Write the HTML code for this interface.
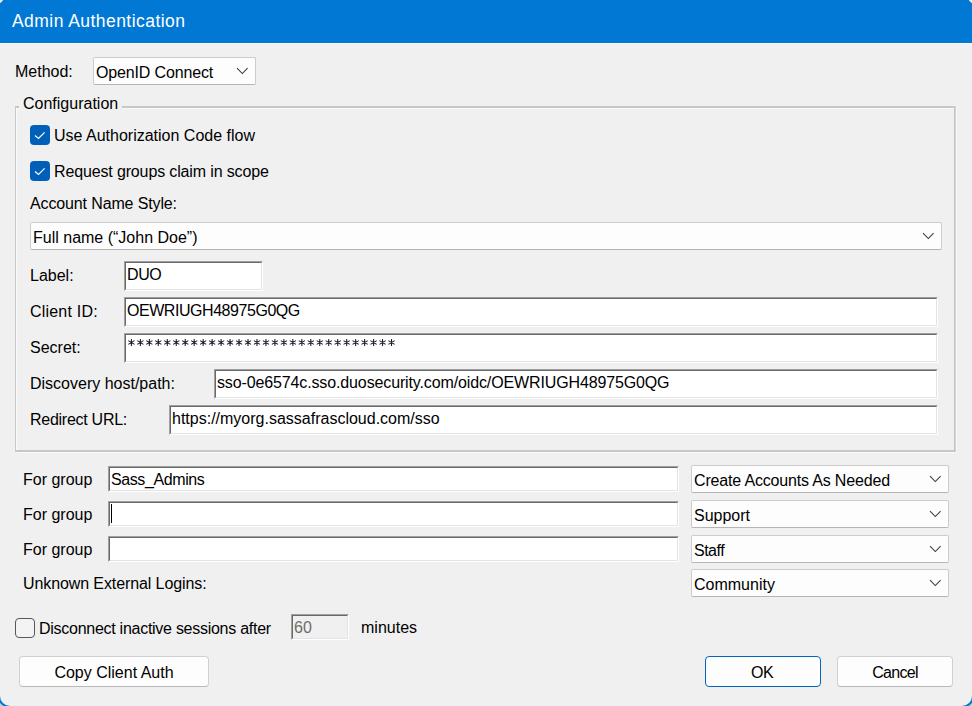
<!DOCTYPE html>
<html><head><meta charset="utf-8">
<style>
html,body{margin:0;padding:0;}
body{width:972px;height:706px;overflow:hidden;background:#f0f0f0;position:relative;font-family:"Liberation Sans",sans-serif;color:#000;}
.t{position:absolute;white-space:nowrap;font-size:16px;line-height:18px;margin-top:1px;}
.title{position:absolute;left:0;top:0;width:972px;height:43px;background:#0078d4;}
.titleline{position:absolute;left:0;top:43px;width:972px;height:1px;background:#fbf6ee;}
.combo{position:absolute;box-sizing:border-box;background:#fdfdfd;border:1px solid #cccccc;border-bottom-color:#b5b5b5;border-radius:2px;}
.edit{position:absolute;box-sizing:border-box;background:#fff;border-style:solid;border-width:2px;border-color:#a0a0a0 #ffffff #ffffff #a0a0a0;}
.edit::before{content:"";position:absolute;left:-1px;top:-1px;right:-1px;bottom:-1px;border-style:solid;border-width:1px;border-color:#696969 #e3e3e3 #e3e3e3 #696969;}
.chev{position:absolute;}
.cb{position:absolute;width:20px;height:20px;box-sizing:border-box;border-radius:4px;}
.btn{position:absolute;box-sizing:border-box;background:#fdfdfd;border:1px solid #d0d0d0;border-bottom-color:#b8b8b8;border-radius:4px;height:31px;}
.group{position:absolute;left:15px;top:106px;width:940px;height:345px;box-sizing:border-box;border:1px solid #c8c8c8;box-shadow:inset 1px 1px 0 #fff, 1px 1px 0 #fff;}
</style></head><body>
<div class="title"></div>
<div class="titleline"></div>
<div class="t" style="left:12px;top:11px;margin-top:0;font-size:17.5px;line-height:21px;color:#fff;letter-spacing:0.45px;">Admin Authentication</div>

<div class="t" style="left:15px;top:62px;">Method:</div>
<div class="combo" style="left:93px;top:57px;width:163px;height:28px;"></div>
<div class="t" style="left:96px;top:63px;letter-spacing:-0.15px;">OpenID Connect</div>
<svg class="chev" style="left:236px;top:66px;" width="14" height="9" viewBox="0 0 14 9"><path d="M1 2.2 L6.3 7.5 L11.6 2.2" fill="none" stroke="#3a3a3a" stroke-width="1.05"/></svg>

<div style="position:absolute;left:16px;top:108px;width:938px;height:1px;background:#fafafa;"></div>
<div style="position:absolute;left:16px;top:108px;width:1px;height:342px;background:#fafafa;"></div>
<div style="position:absolute;left:956px;top:106px;width:1px;height:347px;background:#f8f8f8;"></div>
<div style="position:absolute;left:15px;top:452px;width:942px;height:1px;background:#f8f8f8;"></div>
<div style="position:absolute;left:15px;top:106px;width:941px;height:2px;background:#c8c8c8;"></div>
<div style="position:absolute;left:15px;top:106px;width:1px;height:346px;background:#c8c8c8;"></div>
<div style="position:absolute;left:954px;top:106px;width:2px;height:346px;background:linear-gradient(90deg,#c6c6c6 50%,#d2d2d2 50%);"></div>
<div style="position:absolute;left:15px;top:450px;width:941px;height:2px;background:#c7c7c7;"></div>
<div class="t" style="left:19px;top:94px;padding:0 4px;background:#f0f0f0;">Configuration</div>

<div class="cb" style="left:30px;top:125px;background:#005fb8;"></div>
<svg class="chev" style="left:30px;top:125px;" width="20" height="20" viewBox="0 0 20 20"><path d="M5 10.5 L8.5 13.5 L14.6 7.4" fill="none" stroke="#fff" stroke-width="1.25"/></svg>
<div class="t" style="left:54px;top:126px;">Use Authorization Code flow</div>
<div class="cb" style="left:30px;top:161px;background:#005fb8;"></div>
<svg class="chev" style="left:30px;top:161px;" width="20" height="20" viewBox="0 0 20 20"><path d="M5 10.5 L8.5 13.5 L14.6 7.4" fill="none" stroke="#fff" stroke-width="1.25"/></svg>
<div class="t" style="left:54px;top:162px;letter-spacing:-0.14px;">Request groups claim in scope</div>

<div class="t" style="left:30px;top:194px;letter-spacing:-0.13px;">Account Name Style:</div>
<div class="combo" style="left:30px;top:222px;width:912px;height:28px;"></div>
<div class="t" style="left:33px;top:228px;">Full name (“John Doe”)</div>
<svg class="chev" style="left:922px;top:231px;" width="14" height="9" viewBox="0 0 14 9"><path d="M1 2.2 L6.3 7.5 L11.6 2.2" fill="none" stroke="#3a3a3a" stroke-width="1.05"/></svg>

<div class="t" style="left:30px;top:266px;">Label:</div>
<div class="edit" style="left:124px;top:261px;width:139px;height:30px;"></div>
<div class="t" style="left:127px;top:265px;letter-spacing:-0.4px;">DUO</div>

<div class="t" style="left:30px;top:302px;letter-spacing:0.2px;">Client ID:</div>
<div class="edit" style="left:124px;top:297px;width:814px;height:30px;"></div>
<div class="t" style="left:127px;top:301px;letter-spacing:-0.45px;">OEWRIUGH48975G0QG</div>

<div class="t" style="left:30px;top:338px;">Secret:</div>
<div class="edit" style="left:124px;top:333px;width:814px;height:30px;"></div>
<svg style="position:absolute;left:0;top:0;" width="972" height="706"><path d="M131.40 338.90V346.10M128.30 340.60L134.50 344.40M128.30 344.40L134.50 340.60M140.37 338.90V346.10M137.27 340.60L143.47 344.40M137.27 344.40L143.47 340.60M149.34 338.90V346.10M146.24 340.60L152.44 344.40M146.24 344.40L152.44 340.60M158.31 338.90V346.10M155.21 340.60L161.41 344.40M155.21 344.40L161.41 340.60M167.28 338.90V346.10M164.18 340.60L170.38 344.40M164.18 344.40L170.38 340.60M176.25 338.90V346.10M173.15 340.60L179.35 344.40M173.15 344.40L179.35 340.60M185.22 338.90V346.10M182.12 340.60L188.32 344.40M182.12 344.40L188.32 340.60M194.19 338.90V346.10M191.09 340.60L197.29 344.40M191.09 344.40L197.29 340.60M203.16 338.90V346.10M200.06 340.60L206.26 344.40M200.06 344.40L206.26 340.60M212.13 338.90V346.10M209.03 340.60L215.23 344.40M209.03 344.40L215.23 340.60M221.10 338.90V346.10M218.00 340.60L224.20 344.40M218.00 344.40L224.20 340.60M230.07 338.90V346.10M226.97 340.60L233.17 344.40M226.97 344.40L233.17 340.60M239.04 338.90V346.10M235.94 340.60L242.14 344.40M235.94 344.40L242.14 340.60M248.01 338.90V346.10M244.91 340.60L251.11 344.40M244.91 344.40L251.11 340.60M256.98 338.90V346.10M253.88 340.60L260.08 344.40M253.88 344.40L260.08 340.60M265.95 338.90V346.10M262.85 340.60L269.05 344.40M262.85 344.40L269.05 340.60M274.92 338.90V346.10M271.82 340.60L278.02 344.40M271.82 344.40L278.02 340.60M283.89 338.90V346.10M280.79 340.60L286.99 344.40M280.79 344.40L286.99 340.60M292.86 338.90V346.10M289.76 340.60L295.96 344.40M289.76 344.40L295.96 340.60M301.83 338.90V346.10M298.73 340.60L304.93 344.40M298.73 344.40L304.93 340.60M310.80 338.90V346.10M307.70 340.60L313.90 344.40M307.70 344.40L313.90 340.60M319.77 338.90V346.10M316.67 340.60L322.87 344.40M316.67 344.40L322.87 340.60M328.74 338.90V346.10M325.64 340.60L331.84 344.40M325.64 344.40L331.84 340.60M337.71 338.90V346.10M334.61 340.60L340.81 344.40M334.61 344.40L340.81 340.60M346.68 338.90V346.10M343.58 340.60L349.78 344.40M343.58 344.40L349.78 340.60M355.65 338.90V346.10M352.55 340.60L358.75 344.40M352.55 344.40L358.75 340.60M364.62 338.90V346.10M361.52 340.60L367.72 344.40M361.52 344.40L367.72 340.60M373.59 338.90V346.10M370.49 340.60L376.69 344.40M370.49 344.40L376.69 340.60M382.56 338.90V346.10M379.46 340.60L385.66 344.40M379.46 344.40L385.66 340.60M391.53 338.90V346.10M388.43 340.60L394.63 344.40M388.43 344.40L394.63 340.60" fill="none" stroke="#1a1a2a" stroke-width="1.05"/></svg>

<div class="t" style="left:30px;top:374px;">Discovery host/path:</div>
<div class="edit" style="left:214px;top:369px;width:724px;height:30px;"></div>
<div class="t" style="left:217px;top:373px;letter-spacing:-0.13px;">sso-0e6574c.sso.duosecurity.com/oidc/OEWRIUGH48975G0QG</div>

<div class="t" style="left:30px;top:410px;letter-spacing:-0.27px;">Redirect URL:</div>
<div class="edit" style="left:169px;top:405px;width:769px;height:30px;"></div>
<div class="t" style="left:172px;top:409px;">https://myorg.sassafrascloud.com/sso</div>

<div class="t" style="left:23px;top:470px;">For group</div>
<div class="edit" style="left:108px;top:466px;width:571px;height:26px;"></div>
<div class="t" style="left:111px;top:470px;letter-spacing:-0.4px;">Sass_Admins</div>
<div class="combo" style="left:691px;top:465px;width:258px;height:28px;"></div>
<div class="t" style="left:694px;top:471px;letter-spacing:-0.17px;">Create Accounts As Needed</div>
<svg class="chev" style="left:929px;top:474px;" width="14" height="9" viewBox="0 0 14 9"><path d="M1 2.2 L6.3 7.5 L11.6 2.2" fill="none" stroke="#3a3a3a" stroke-width="1.05"/></svg>

<div class="t" style="left:23px;top:505px;">For group</div>
<div class="edit" style="left:108px;top:501px;width:571px;height:26px;"></div>
<div style="position:absolute;left:111px;top:504px;width:1px;height:19px;background:#000;"></div>
<div class="combo" style="left:691px;top:500px;width:258px;height:28px;"></div>
<div class="t" style="left:694px;top:506px;">Support</div>
<svg class="chev" style="left:929px;top:509px;" width="14" height="9" viewBox="0 0 14 9"><path d="M1 2.2 L6.3 7.5 L11.6 2.2" fill="none" stroke="#3a3a3a" stroke-width="1.05"/></svg>

<div class="t" style="left:23px;top:540px;">For group</div>
<div class="edit" style="left:108px;top:536px;width:571px;height:26px;"></div>
<div class="combo" style="left:691px;top:535px;width:258px;height:28px;"></div>
<div class="t" style="left:694px;top:541px;letter-spacing:-0.5px;">Staff</div>
<svg class="chev" style="left:929px;top:544px;" width="14" height="9" viewBox="0 0 14 9"><path d="M1 2.2 L6.3 7.5 L11.6 2.2" fill="none" stroke="#3a3a3a" stroke-width="1.05"/></svg>

<div class="t" style="left:23px;top:574px;letter-spacing:-0.1px;">Unknown External Logins:</div>
<div class="combo" style="left:691px;top:569px;width:258px;height:28px;"></div>
<div class="t" style="left:694px;top:575px;">Community</div>
<svg class="chev" style="left:929px;top:578px;" width="14" height="9" viewBox="0 0 14 9"><path d="M1 2.2 L6.3 7.5 L11.6 2.2" fill="none" stroke="#3a3a3a" stroke-width="1.05"/></svg>

<div class="cb" style="left:15px;top:618px;border:1.3px solid #575757;background:#f3f3f3;"></div>
<div class="t" style="left:39px;top:619px;letter-spacing:-0.27px;">Disconnect inactive sessions after</div>
<div class="edit" style="left:291px;top:614px;width:58px;height:26px;background:#f0f0f0;"></div>
<div class="t" style="left:294px;top:618px;color:#6d6d6d;">60</div>
<div class="t" style="left:361px;top:618px;">minutes</div>

<div class="btn" style="left:19px;top:656px;width:190px;"></div>
<div class="t" style="left:19px;top:663px;width:190px;text-align:center;">Copy Client Auth</div>
<div class="btn" style="left:705px;top:656px;width:116px;border:1px solid #0067c0;"></div>
<div class="t" style="left:704px;top:663px;width:116px;text-align:center;letter-spacing:-0.6px;">OK</div>
<div class="btn" style="left:837px;top:656px;width:116px;"></div>
<div class="t" style="left:837px;top:663px;width:116px;text-align:center;letter-spacing:-0.7px;">Cancel</div>
<div style="position:absolute;left:-2px;top:-200px;width:976px;height:908px;box-sizing:border-box;border:2px solid #0078d4;border-radius:12px;box-shadow:0 0 0 40px #d2ccc6;"></div>
<div style="position:absolute;left:0;top:0;width:3px;height:3px;background:linear-gradient(135deg,#e9ebe6 0%,#e9ebe6 45%,rgba(0,120,212,0) 70%);"></div>
<div style="position:absolute;left:969px;top:0;width:3px;height:3px;background:linear-gradient(225deg,#f3eee8 0%,#f3eee8 45%,rgba(0,120,212,0) 70%);"></div>
</body></html>
